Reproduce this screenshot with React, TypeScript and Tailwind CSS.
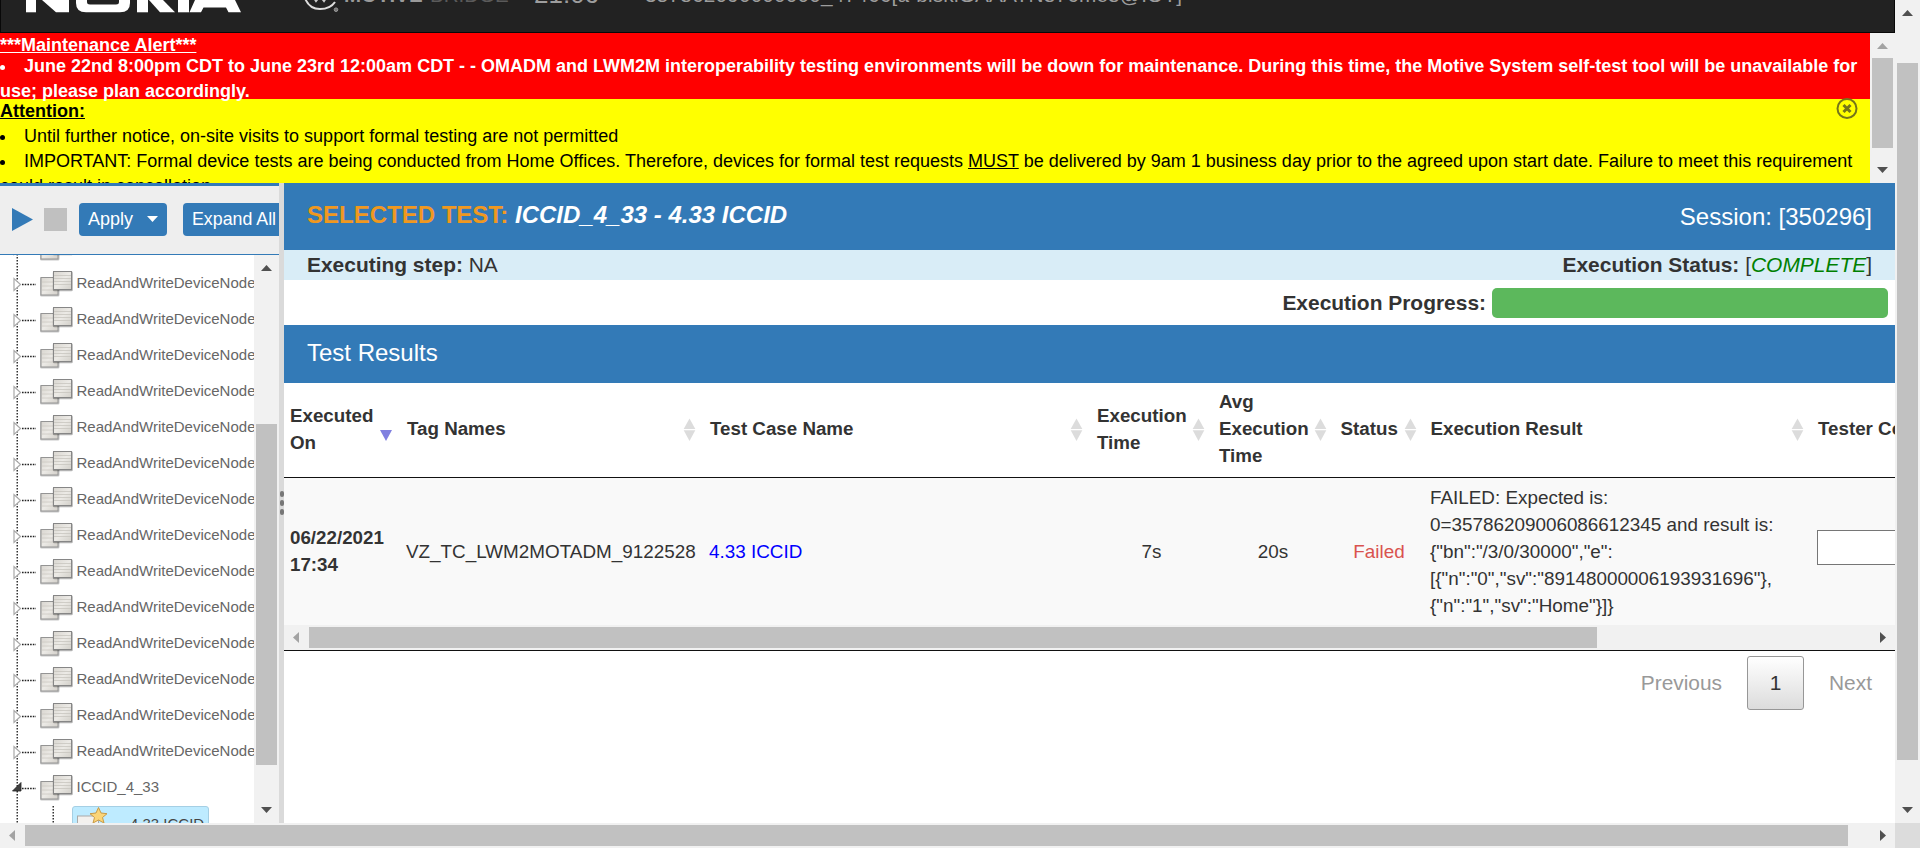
import React from "react";

const SANS = "font-['Liberation_Sans',Arial,sans-serif]";

type Dir = "up" | "down" | "left" | "right";

function Arrow({ dir, dim = false }: { dir: Dir; dim?: boolean }) {
  const pts = {
    up: "5.5,0 11,6 0,6",
    down: "0,0 11,0 5.5,6",
    left: "6,0 6,11 0,5.5",
    right: "0,0 6,5.5 0,11",
  }[dir];
  const vertical = dir === "up" || dir === "down";
  return (
    <svg width={vertical ? 11 : 6} height={vertical ? 6 : 11} className="block shrink-0">
      <polygon points={pts} fill={dim ? "#a3a3a3" : "#505050"} />
    </svg>
  );
}

function SheetsIcon() {
  return (
    <svg width="36" height="28" viewBox="0 0 36 28" className="block shrink-0">
      <defs>
        <linearGradient id="sheet" x1="0" y1="0" x2="1" y2="1">
          <stop offset="0" stopColor="#d8d5cf" />
          <stop offset="0.5" stopColor="#eceae6" />
          <stop offset="1" stopColor="#d2cfc9" />
        </linearGradient>
      </defs>
      <rect x="1" y="7" width="19.500" height="19.500" rx="1.500" fill="#000" opacity="0.22" />
      <rect x="2" y="7.500" width="17" height="17.500" fill="url(#sheet)" stroke="#949494" />
      <path d="M3 12h15M3 16h15M3 20h15" stroke="#cbc8c2" strokeWidth="0.8" />
      <rect x="13.800" y="1.300" width="20" height="20" rx="1.500" fill="#000" opacity="0.3" />
      <rect x="14.500" y="1.500" width="18" height="18" fill="url(#sheet)" stroke="#868686" />
      <path d="M15 5.500h17M15 8.500h17M15 11.500h17M15 14.500h17" stroke="#c8c5bf" strokeWidth="0.8" />
    </svg>
  );
}

function TreeRow({ label, open = false }: { label: string; open?: boolean }) {
  return (
    <div className="flex h-9 shrink-0 items-center whitespace-nowrap">
      <svg width="39" height="36" className="block shrink-0">
        <path d="M17.25 0V36" stroke="#333" strokeWidth="1.5" strokeDasharray="1.5 1.5" />
        <path d="M22 18.5H36" stroke="#222" strokeWidth="1.5" strokeDasharray="1.6 1.1" />
        {open ? (
          <path d="M21 12.5V21H12.5Z" fill="#404040" stroke="#222" strokeWidth="0.8" />
        ) : (
          <path d="M14 12.5V24.5L20.5 18.5Z" fill="#fff" stroke="#a8a8a8" strokeWidth="1.2" />
        )}
      </svg>
      <SheetsIcon />
      <span className="-mt-px ml-[1.500px] text-[15px] text-[#666]">{label}</span>
    </div>
  );
}

function SortIcon() {
  return (
    <svg width="13" height="24" className="block shrink-0">
      <polygon points="6.5,0.5 12.3,11 0.7,11" fill="#dcdcdc" />
      <polygon points="0.7,12.3 12.3,12.3 6.5,23" fill="#dcdcdc" />
    </svg>
  );
}

const columns = [
  { lines: ["Executed", "On"], width: "w-[117px]", sort: "desc" },
  { lines: ["Tag Names"], width: "w-[303px]", sort: "both" },
  { lines: ["Test Case Name"], width: "w-[387px]", sort: "both" },
  { lines: ["Execution", "Time"], width: "w-[122px]", sort: "both" },
  { lines: ["Avg", "Execution", "Time"], width: "w-[121.500px]", sort: "both" },
  { lines: ["Status"], width: "w-[90px]", sort: "both" },
  { lines: ["Execution Result"], width: "w-[387.500px]", sort: "both" },
  { lines: ["Tester Comments"], width: "w-[300px]", sort: "none" },
];

function TopBar() {
  return (
    <header className="flex h-[33px] shrink-0 items-start overflow-hidden border-r border-b border-l border-[#080808] bg-[#222]">
      <svg width="216" height="14" viewBox="0 0 216 14" className="ml-[25px] block shrink-0">
        <g fill="#fff">
          <path d="M0 0H10V12.300H0Z" />
          <path d="M16 0L30 12.300H43V0Z" />
          <path d="M50 0V3Q50 12.300 60 12.300H94Q104 12.300 104 3V0H93V2Q93 4.500 90 4.500H64Q61 4.500 61 2V0Z" />
          <path d="M111 0H122V12.300H111Z" />
          <path d="M123 0L134 12.300H149L137 0Z" />
          <path d="M152 0H163V12.300H152Z" />
          <path d="M169 0L163.500 12.300H175L177.500 7.500H200L202.500 12.300H215L209 0Z" />
        </g>
      </svg>
      <svg width="36" height="14" viewBox="0 0 36 14" className="ml-[62px] block shrink-0">
        <path d="M0.500 -3C4 7 10 9 16 9C23 9 28 6.500 31 2" fill="none" stroke="#ddd" strokeWidth="2" />
        <path d="M8 -5L12 1L16 -4L20 1L24 -5" fill="none" stroke="#ccc" strokeWidth="2" />
        <circle cx="32" cy="9.700" r="1.800" fill="#777" stroke="#999" />
      </svg>
      <div className="-mt-[16px] ml-[4px] flex text-[20.500px] leading-[22px] whitespace-nowrap">
        <span className="w-[86px] font-bold text-[#9a9a9a]">MOTIVE</span>
        <span className="w-[104px] text-[#5a5a5a]">BRIDGE</span>
      </div>
      <span className="-mt-[19px] w-[65px] text-[26px] leading-[26px] text-[#9d9d9d]">21:06</span>
      <span className="-mt-[16px] ml-[46px] text-[20.800px] leading-[22px] tracking-[0.170px] whitespace-nowrap text-[#9d9d9d]">
        357862090000000_47466[a-biskiGAAATN876me8@IOT]
      </span>
    </header>
  );
}

function BulletLine({ children }: { children: React.ReactNode }) {
  return (
    <div className="flex items-start whitespace-nowrap">
      <span className="mt-[11px] mr-[19px] h-[5px] w-[5px] shrink-0 rounded-full bg-current" />
      <span>{children}</span>
    </div>
  );
}

function Banner() {
  return (
    <div className="flex h-[150px] shrink-0 overflow-hidden text-[18px] leading-[25px]">
      <div className="relative w-[1870px] shrink-0">
        <div className="h-[66px] bg-[#f00] font-bold text-white">
          <div className="h-[21px] leading-[24px] underline">***Maintenance Alert***</div>
          <BulletLine>June 22nd 8:00pm CDT to June 23rd 12:00am CDT - - OMADM and LWM2M interoperability testing environments will be down for maintenance. During this time, the Motive System self-test tool will be unavailable for</BulletLine>
          <div>use; please plan accordingly.</div>
        </div>
        <div className="h-[84px] overflow-hidden bg-[#ff0] text-black">
          <div className="h-[25px] leading-[24px] font-bold underline">Attention:</div>
          <BulletLine>Until further notice, on-site visits to support formal testing are not permitted</BulletLine>
          <BulletLine>IMPORTANT: Formal device tests are being conducted from Home Offices. Therefore, devices for formal test requests <u>MUST</u> be delivered by 9am 1 business day prior to the agreed upon start date. Failure to meet this requirement</BulletLine>
          <div>could result in cancellation.</div>
        </div>
        <svg width="22" height="22" className="absolute top-[65px] right-[12px]">
          <circle cx="11" cy="10.500" r="9.500" fill="none" stroke="#75751a" strokeWidth="2" />
          <path d="M7.500 7L14.500 14M14.500 7L7.500 14" stroke="#75751a" strokeWidth="3" />
        </svg>
      </div>
      <div className="flex w-[25px] flex-col items-center bg-[#f1f1f1] pt-[10px] pb-[10px]">
        <Arrow dir="up" dim />
        <div className="mt-[9px] h-[90px] w-[21px] bg-[#c1c1c1]" />
        <div className="mt-auto"><Arrow dir="down" /></div>
      </div>
    </div>
  );
}

function Sidebar() {
  const rows = Array.from({ length: 14 });
  return (
    <aside className="flex w-[279px] shrink-0 flex-col overflow-hidden">
      <div className="flex h-[72px] shrink-0 items-start overflow-hidden border-t-[3px] border-b border-[#337ab7] bg-[#eee] pt-[17px] pl-3">
        <svg width="22" height="24" className="mt-[5px] block shrink-0">
          <polygon points="0,0 21,11.500 0,23" fill="#337ab7" />
        </svg>
        <div className="mt-[5px] ml-[10px] h-[23px] w-[23px] shrink-0 bg-[#c0c0c0]" />
        <button className="ml-3 flex h-[33px] w-[88px] shrink-0 items-center rounded-[4px] bg-[#337ab7] pl-[9px] text-[18px] text-white">
          Apply
          <svg width="12" height="7" className="ml-[14px] block"><polygon points="0,0 11,0 5.500,6" fill="#fff" /></svg>
        </button>
        <button className="ml-4 h-[33px] w-[104px] shrink-0 rounded-[4px] bg-[#337ab7] pl-[9px] text-left text-[17.800px] whitespace-nowrap text-white">Expand All</button>
      </div>
      <div className="flex min-h-0 flex-1">
        <div className="w-[254px] shrink-0 overflow-hidden">
          <div className="-mt-[25px] flex flex-col">
            <TreeRow label="" />
            {rows.map((_, i) => <TreeRow key={i} label="ReadAndWriteDeviceNode" />)}
            <TreeRow label="ICCID_4_33" open />
            <div className="flex h-9 shrink-0 items-start">
              <svg width="72" height="36" className="block shrink-0">
                <path d="M17.250 0V36M53.250 0V36" stroke="#333" strokeWidth="1.500" strokeDasharray="1.500 1.500" />
              </svg>
              <div className="flex h-[36px] w-[137px] items-start rounded-[3px] border border-[#a5cfe4] bg-[#beebff] pl-1">
                <svg width="34" height="34" viewBox="0 0 34 34" className="block">
                  <rect x="0.500" y="9" width="21" height="22" fill="#f3f1ee" stroke="#aaa" />
                  <path d="M21.500 0.500L24 6L30 6.700L25.500 10.500L27 16L21.500 13L16 16L17.500 10.500L13 6.700L19 6Z" fill="#fbd578" stroke="#c99a45" />
                </svg>
                <span className="mt-[6px] ml-[19px] text-[15px] text-[#444]">4.33 ICCID</span>
              </div>
            </div>
          </div>
        </div>
        <div className="flex w-[25px] flex-col items-center bg-[#f1f1f1] py-[10px]">
          <Arrow dir="up" />
          <div className="mt-[153px] h-[341px] w-[21px] bg-[#c1c1c1]" />
          <div className="mt-auto"><Arrow dir="down" /></div>
        </div>
      </div>
    </aside>
  );
}

function Results() {
  return (
    <div className="flex h-[268px] shrink-0 flex-col overflow-hidden border-b border-[#111] text-[18.750px] leading-[27px] text-[#333]">
      <div className="flex h-[95px] shrink-0 border-b border-[#111]">
        {columns.map((c) => (
          <div key={c.lines.join()} className={`flex shrink-0 items-center pl-[6px] font-bold ${c.width}`}>
            <div className="-mt-[3px] whitespace-nowrap">{c.lines.map((l) => <div key={l}>{l}</div>)}</div>
            {c.sort === "desc" && (
              <svg width="12" height="12" className="mt-[11px] mr-[9px] ml-auto block"><polygon points="0,0 12,0 6,11" fill="#8080e0" /></svg>
            )}
            {c.sort === "both" && <div className="-mt-px mr-[8px] ml-auto"><SortIcon /></div>}
          </div>
        ))}
      </div>
      <div className="flex h-[147px] shrink-0 items-center bg-[#f9f9f9] text-[18.880px]">
        <div className="-mt-[2px] w-[117px] shrink-0 pl-[6px] text-[18.750px] font-bold">06/22/2021<br />17:34</div>
        <div className="w-[303px] shrink-0 pl-[5px]">VZ_TC_LWM2MOTADM_9122528</div>
        <div className="w-[387px] shrink-0 pl-[5px] text-[#00f]">4.33 ICCID</div>
        <div className="w-[121px] shrink-0 text-center">7s</div>
        <div className="w-[122px] shrink-0 text-center">20s</div>
        <div className="w-[90px] shrink-0 text-center text-[#d9534f]">Failed</div>
        <div className="w-[393px] shrink-0 pl-[6px]">
          <div>FAILED: Expected is:</div>
          <div>0=35786209006086612345 and result is:</div>
          <div>{'{"bn":"/3/0/30000","e":'}</div>
          <div>{'[{"n":"0","sv":"89148000006193931696"},'}</div>
          <div>{'{"n":"1","sv":"Home"}]}'}</div>
        </div>
        <div className="mb-[9px] h-[35px] w-[250px] shrink-0 border border-[#767676] bg-white" />
      </div>
      <div className="flex h-[25px] shrink-0 items-center bg-[#f1f1f1] px-[9px]">
        <Arrow dir="left" dim />
        <div className="ml-[10px] h-[21px] w-[1288px] bg-[#c1c1c1]" />
        <div className="ml-auto"><Arrow dir="right" /></div>
      </div>
    </div>
  );
}

function Main() {
  return (
    <main className="flex min-w-0 flex-1 flex-col overflow-hidden bg-white text-[#333]">
      <div className="flex h-[67px] shrink-0 justify-between bg-[#337ab7] px-[23px] text-[24px] leading-[28px] text-white">
        <div className="pt-[18px] font-bold"><span className="text-[#f0981f]">SELECTED TEST:</span> <i>ICCID_4_33 - 4.33 ICCID</i></div>
        <div className="pt-[20px]">Session: [350296]</div>
      </div>
      <div className="flex h-[30px] shrink-0 justify-between bg-[#d9edf7] px-[23px] text-[20.950px] leading-[30px]">
        <div><b>Executing step:</b> NA</div>
        <div><b>Execution Status:</b> [<i className="text-[#008000]">COMPLETE</i>]</div>
      </div>
      <div className="flex h-[45px] shrink-0 items-center justify-end gap-[6px] pr-[7px] text-[20.950px]">
        <b>Execution Progress:</b>
        <div className="h-[30px] w-[396px] rounded-[5px] bg-[#5cb85c]" />
      </div>
      <h3 className="h-[58px] shrink-0 bg-[#337ab7] pl-[23px] text-[24px] leading-[56px] text-white">Test Results</h3>
      <Results />
      <div className="flex justify-end pt-[5px] pr-[23px] text-[20.900px] leading-[54px] text-[#999]">
        <span>Previous</span>
        <span className="mr-[25px] ml-[25px] h-[54px] w-[57px] rounded-[3px] border border-[#979797] bg-gradient-to-b from-white to-[#dcdcdc] text-center leading-[52px] text-[#333]">1</span>
        <span>Next</span>
      </div>
    </main>
  );
}

export default function App() {
  return (
    <div className={`flex h-[848px] w-[1920px] flex-col overflow-hidden bg-white ${SANS}`}>
      <div className="flex h-[823px] shrink-0">
        <div className="flex w-[1895px] shrink-0 flex-col">
          <TopBar />
          <Banner />
          <div className="flex min-h-0 flex-1">
            <Sidebar />
            <div className="flex w-[5px] shrink-0 flex-col items-center justify-center gap-[3px] bg-[#dadada]">
              <i className="h-[6px] w-[4px] rounded-full bg-[#777]" />
              <i className="h-[6px] w-[4px] rounded-full bg-[#777]" />
              <i className="h-[6px] w-[4px] rounded-full bg-[#777]" />
            </div>
            <Main />
          </div>
        </div>
        <div className="flex w-[25px] flex-col items-center bg-[#f1f1f1] py-[10px]">
          <Arrow dir="up" />
          <div className="mt-[47px] h-[697px] w-[21px] bg-[#c1c1c1]" />
          <div className="mt-auto"><Arrow dir="down" /></div>
        </div>
      </div>
      <div className="flex h-[25px]">
        <div className="flex w-[1895px] items-center bg-[#f1f1f1] px-[9px]">
          <Arrow dir="left" dim />
          <div className="ml-[10px] h-[21px] w-[1823px] bg-[#c1c1c1]" />
          <div className="ml-auto"><Arrow dir="right" /></div>
        </div>
        <div className="w-[25px] bg-[#dcdcdc]" />
      </div>
    </div>
  );
}
